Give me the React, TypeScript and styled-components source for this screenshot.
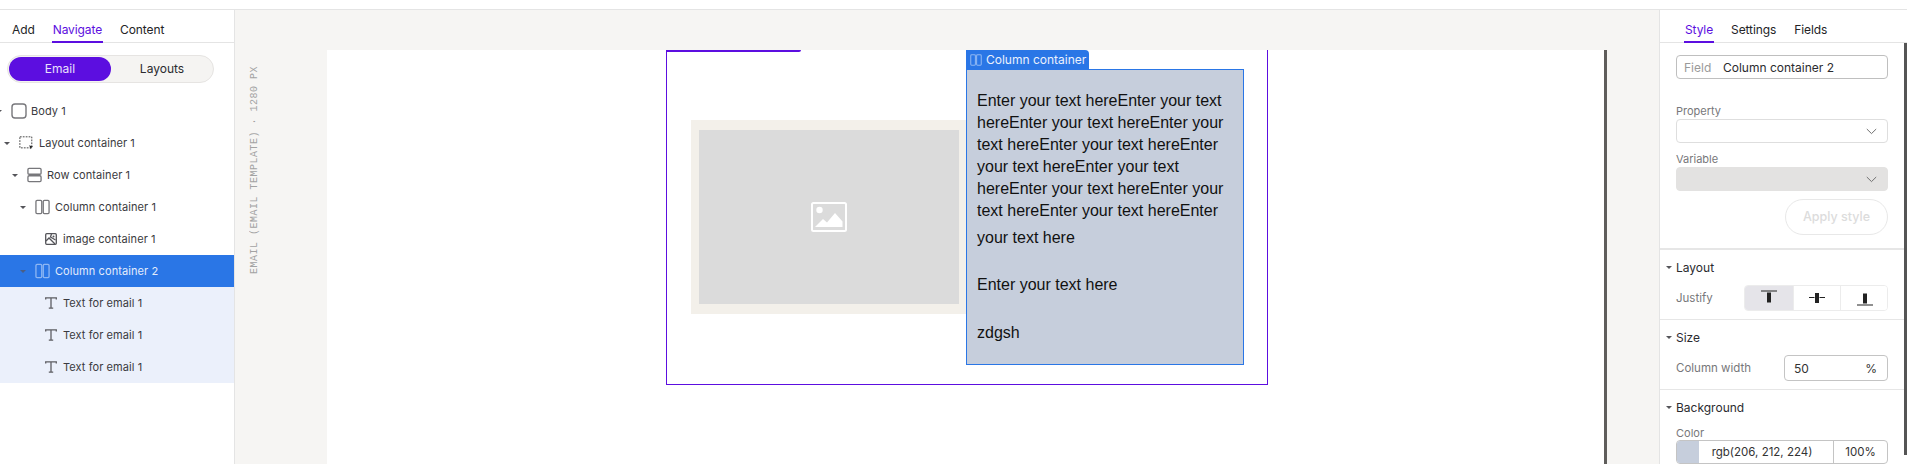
import React from 'react';
import styled, { createGlobalStyle } from 'styled-components';

const Global = createGlobalStyle`
  html, body { margin: 0; padding: 0; width: 1907px; height: 464px; overflow: hidden; background: #fff; }
  * { box-sizing: border-box; }
  #root { width: 1907px; height: 464px; }
`;

const UI = `"Inter", "Noto Sans", sans-serif`;

const Page = styled.div`
  display: flex; flex-direction: column; width: 1907px; height: 464px; font-family: ${UI}; color: #2b2b2f; overflow: hidden;
`;
const TopBar = styled.div`height: 10px; flex: none; border-bottom: 1px solid #e4e4e4; background: #fff;`;
const Main = styled.div`display: flex; flex: 1; min-height: 0;`;

const LeftPanel = styled.aside`width: 235px; flex: none; border-right: 1px solid #e4e4e4; background: #fff; overflow: hidden;`;
const RightPanel = styled.aside`position: relative; flex: 1; border-left: 1px solid #e4e4e4; background: #fff; overflow: hidden;`;

const Tabs = styled.div<{ $pad: number; $gap: number }>`
  display: flex; gap: ${p => p.$gap}px; height: 33px; padding-left: ${p => p.$pad}px; border-bottom: 1px solid #e4e4e4;
`;
const Tab = styled.div<{ $active?: boolean }>`
  height: 33px; padding: 0 1px; line-height: 39px; font-size: 12px; letter-spacing: -0.1px; white-space: nowrap;
  color: ${p => (p.$active ? '#5c0ee0' : '#232326')};
  border-bottom: 2px solid ${p => (p.$active ? '#5c0ee0' : 'transparent')};
`;

const Segment = styled.div`
  display: flex; width: 207px; height: 28px; margin: 12px 0 12px 7px; padding: 1px; border: 1px solid #e6e4e2; border-radius: 14px; background: #f5f4f2;
`;
const SegmentItem = styled.div<{ $active?: boolean }>`
  width: 102px; flex: none; height: 24px; border-radius: 12px; text-align: center; line-height: 24px; font-size: 12px;
  color: ${p => (p.$active ? '#e9e0fb' : '#2b2b2f')}; background: ${p => (p.$active ? '#5c0ee0' : 'transparent')};
`;

const Tree = styled.div`display: flex; flex-direction: column;`;
const TreeRow = styled.div<{ $depth: number; $state?: 'selected' | 'child' }>`
  display: flex; align-items: center; height: 32px; padding-left: ${p => p.$depth}px; font-size: 11px; letter-spacing: 0.08px; white-space: nowrap;
  color: ${p => (p.$state === 'selected' ? '#e3ecfc' : '#3a3a40')};
  background: ${p => (p.$state === 'selected' ? '#2a76e6' : p.$state === 'child' ? '#ebf0fb' : 'transparent')};
`;
const Caret = styled.span<{ $dark?: boolean }>`
  width: 0; height: 0; flex: none; margin-right: 9px; border-left: 3px solid transparent; border-right: 3px solid transparent;
  border-top: 3px solid ${p => (p.$dark ? '#4a5e85' : '#55555a')};
`;
const BodyCaret = styled(Caret)`margin-left: -4px;`;
const Spacer = styled.span`width: 11px; flex: none;`;
const IconSlot = styled.span<{ $w: number; $gap: number }>`
  display: flex; flex: none; width: ${p => p.$w}px; margin-right: ${p => p.$gap}px;
`;

const BodyIcon = () => (
  <svg width="16" height="16" viewBox="0 0 16 16" fill="none" stroke="#77777b" strokeWidth="1.4"><rect x="1" y="1" width="14" height="14" rx="3" /></svg>
);
const LayoutIcon = () => (
  <svg width="17" height="16" viewBox="0 0 17 16" fill="none"><rect x="1" y="1" width="13.5" height="12.5" stroke="#333" strokeWidth="1" strokeDasharray="2 1.3" /><path d="M11.5 10.5l4.5 1.8-1.8.8-.8 2z" fill="#222" /></svg>
);
const RowIcon = () => (
  <svg width="16" height="16" viewBox="0 0 16 16" fill="none" stroke="#77777b" strokeWidth="1.4"><rect x="1" y="1" width="14" height="6.2" rx="1.2" /><rect x="1" y="8.8" width="14" height="6.2" rx="1.2" /></svg>
);
const ColumnIcon = ({ c = '#77777b', size = 16 }: { c?: string; size?: number }) => (
  <svg width={size} height={size} viewBox="0 0 16 16" fill="none" stroke={c} strokeWidth="1.4"><rect x="1" y="1" width="6.2" height="14" rx="1.2" /><rect x="8.8" y="1" width="6.2" height="14" rx="1.2" /></svg>
);
const ImageIcon = () => (
  <svg width="12" height="12" viewBox="0 0 12 12" fill="none" stroke="#55555a" strokeWidth="1.3"><rect x="0.7" y="0.7" width="10.6" height="10.6" rx="1" /><path d="M1 8l3-3 6 6M6.5 1l-1 3 5 3" /><circle cx="8.5" cy="3.5" r="1" fill="#55555a" stroke="none" /></svg>
);
const TextIcon = () => (
  <svg width="12" height="12" viewBox="0 0 12 12" fill="none" stroke="#5d5d63" strokeWidth="1.3"><path d="M.7 2.5V.8h10.6v1.7M6 .8v10.4M3.8 11.2h4.4" /></svg>
);

const Canvas = styled.main`
  flex: none; width: 1424px; background: #f6f5f3; display: flex; padding-top: 40px; padding-left: 92px; padding-right: 52px; overflow: hidden;
`;
const Ruler = styled.div`
  position: absolute; left: 249px; top: 66px; writing-mode: vertical-rl; transform: rotate(180deg);
  font-family: "Liberation Mono", monospace; font-size: 10px; letter-spacing: 0.5px; color: #a3a3a3; white-space: nowrap;
`;
const Sheet = styled.div`
  flex: 1; background: #fff; border-right: 3px solid #5f5d5b; padding-left: 3px; display: flex; justify-content: center; align-items: flex-start;
`;
const Frame = styled.div`
  position: relative; display: flex; flex: none; width: 602px; height: 335px; padding: 0 23px 0 24px; border: 1px solid #5c0ee0; border-top-width: 0;
`;
const FrameTop = styled.div`position: absolute; left: -1px; top: 0; width: 135px; height: 2px; background: #5c0ee0; border-bottom-right-radius: 2px;`;
const ImageCell = styled.div`
  width: 275px; height: 194px; flex: none; margin-top: 70px; padding: 10px 7px 10px 8px; background: #f3f0ea;
`;
const ImagePlaceholder = styled.div`
  width: 100%; height: 100%; background: #dbdbdb; display: flex; align-items: center; justify-content: center;
`;
const Column = styled.div`
  position: relative; width: 278px; height: 296px; flex: none; margin-top: 19px; padding: 20px 9px 0 10px; background: #c6cedc; border: 1px solid #2a76e6;
  font-family: "Liberation Sans", Arial, sans-serif; font-size: 16px; line-height: 22px; color: #111;
`;
const ColumnLabel = styled.div`
  position: absolute; left: -1px; top: -20px; width: 123px; height: 20px; display: flex; align-items: center; gap: 4px; padding-left: 4px;
  background: #2a76e6; border-top-right-radius: 4px; font-family: ${UI}; font-size: 12px; line-height: 14px; color: #eaf1fd; white-space: nowrap;
`;
const Para = styled.p<{ $top: number }>`margin: ${p => p.$top}px 0 0;`;

const FieldBox = styled.div`
  display: flex; align-items: center; width: 212px; height: 24px; margin: 12px 0 0 16px; padding-left: 7px; border: 1px solid #bfbfbf; border-radius: 4px; font-size: 12px;
`;
const FieldTag = styled.span`color: #9a9a9a; width: 39px;`;
const SmallLabel = styled.div<{ $top: number }>`
  margin: ${p => p.$top}px 0 0 16px; height: 14px; line-height: 14px; font-size: 11px; color: #77777a;
`;
const Select = styled.div<{ $disabled?: boolean }>`
  display: flex; align-items: center; justify-content: flex-end; width: 212px; height: 24px; margin: 1px 0 0 16px; padding-right: 10px; border-radius: 4px;
  border: 1px solid ${p => (p.$disabled ? '#e3e2e1' : '#dedede')}; background: ${p => (p.$disabled ? '#e3e2e1' : '#fff')};
`;
const ApplyRow = styled.div`display: flex; justify-content: flex-end; width: 212px; margin: 8px 0 0 16px;`;
const ApplyButton = styled.div`
  width: 103px; height: 36px; border: 1px solid #e8e8e8; border-radius: 18px; text-align: center; line-height: 34px; font-size: 12.5px; font-weight: 500; color: #dcdcdc;
`;
const Section = styled.section<{ $border: number; $top: number }>`
  margin-top: ${p => p.$top}px; padding: 9px 19px 0 6px; border-top: ${p => p.$border}px solid #e6e6e6;
`;
const SectionHead = styled.div`display: flex; align-items: center; height: 16px; font-size: 12px; color: #2b2b2f;`;
const SectionCaret = styled(Caret)`margin-right: 4px;`;
const PropRow = styled.div`display: flex; align-items: center; justify-content: space-between; height: 26px; margin-top: 10px; padding-left: 10px; font-size: 11.5px; color: #77777a;`;
const Justify = styled.div`display: flex; width: 144px; height: 26px; border: 1px solid #ececec; border-radius: 4px; overflow: hidden;`;
const JustifyButton = styled.div<{ $active?: boolean; $w: number }>`
  width: ${p => p.$w}px; flex: none; display: flex; align-items: center; justify-content: center;
  background: ${p => (p.$active ? '#e5e4e9' : '#fff')}; border-right: 1px solid #ececec; &:last-child { border-right: 0; }
`;
const NumberBox = styled.div`
  display: flex; align-items: center; justify-content: space-between; width: 104px; height: 26px; padding: 0 10px 0 9px; border: 1px solid #c4c4c4; border-radius: 4px; font-size: 12px; color: #333;
`;
const ColorBox = styled.div`
  display: flex; width: 212px; height: 24px; margin-left: 10px; border: 1px solid #c4c4c4; border-radius: 4px; overflow: hidden; font-size: 11.5px; color: #333; line-height: 22px;
`;
const Swatch = styled.span`width: 22px; flex: none; background: #c6cedc;`;
const ColorValue = styled.span`flex: 1; text-align: center; padding-right: 8px; border-right: 1px solid #c4c4c4; white-space: nowrap;`;
const Alpha = styled.span`width: 53px; flex: none; text-align: center;`;
const ColorLabel = styled(SmallLabel)`margin-left: 10px;`;
const Scrollbar = styled.div`position: absolute; right: 0; top: 33px; width: 3px; height: 412px; background: #555;`;

const Chevron = () => (
  <svg width="11" height="7" viewBox="0 0 11 7" fill="none" stroke="#707070" strokeWidth="1"><path d="M.8 1l4.7 4.6L10.2 1" /></svg>
);
const AlignIcon = ({ v }: { v: 'top' | 'mid' | 'bot' }) => (
  <svg width="16" height="16" viewBox="0 0 16 16">
    <rect x="6" y={v === 'top' ? 2.5 : v === 'mid' ? 3 : 3.5} width="4" height="10" fill="#222" />
    {v === 'mid'
      ? <path d="M0 7.5h5.5M10.5 7.5H16" stroke="#222" strokeWidth="1" />
      : <rect x="0" y={v === 'top' ? 0.5 : 14.5} width="16" height="1" fill="#222" />}
  </svg>
);

const TREE: { label: string; depth: number; caret: boolean; icon: React.ReactNode; w: number; gap: number; state?: 'selected' | 'child' }[] = [
  { label: 'Layout container 1', depth: 4, caret: true, icon: <LayoutIcon />, w: 15, gap: 5 },
  { label: 'Row container 1', depth: 12, caret: true, icon: <RowIcon />, w: 15, gap: 5 },
  { label: 'Column container 1', depth: 20, caret: true, icon: <ColumnIcon />, w: 15, gap: 5 },
  { label: 'image container 1', depth: 34, caret: false, icon: <ImageIcon />, w: 12, gap: 6 },
  { label: 'Column container 2', depth: 20, caret: true, icon: <ColumnIcon c="#8db6f3" />, w: 15, gap: 5, state: 'selected' },
  { label: 'Text for email 1', depth: 34, caret: false, icon: <TextIcon />, w: 12, gap: 6, state: 'child' },
  { label: 'Text for email 1', depth: 34, caret: false, icon: <TextIcon />, w: 12, gap: 6, state: 'child' },
  { label: 'Text for email 1', depth: 34, caret: false, icon: <TextIcon />, w: 12, gap: 6, state: 'child' },
];

const REPEAT = 'Enter your text here'.repeat(10) + 'Enter';

export default function App() {
  return (
    <Page>
      <Global />
      <TopBar />
      <Main>
        <LeftPanel>
          <Tabs $pad={11} $gap={16}>
            <Tab>Add</Tab>
            <Tab $active>Navigate</Tab>
            <Tab>Content</Tab>
          </Tabs>
          <Segment>
            <SegmentItem $active>Email</SegmentItem>
            <SegmentItem>Layouts</SegmentItem>
          </Segment>
          <Tree>
            <TreeRow $depth={0}>
              <BodyCaret />
              <IconSlot $w={16} $gap={4}><BodyIcon /></IconSlot>
              Body 1
            </TreeRow>
            {TREE.map((r, i) => (
              <TreeRow key={i} $depth={r.depth} $state={r.state}>
                {r.caret ? <Caret $dark={r.state === 'selected'} /> : <Spacer />}
                <IconSlot $w={r.w} $gap={r.gap}>{r.icon}</IconSlot>
                {r.label}
              </TreeRow>
            ))}
          </Tree>
        </LeftPanel>
        <Canvas>
          <Ruler>EMAIL (EMAIL TEMPLATE) · 1280 PX</Ruler>
          <Sheet>
            <Frame>
              <FrameTop />
              <ImageCell>
                <ImagePlaceholder>
                  <svg width="36" height="30" viewBox="0 0 36 30" fill="none">
                    <rect x="1" y="1" width="34" height="28" rx="1.5" stroke="#fff" strokeWidth="2" />
                    <circle cx="8.5" cy="8" r="3.2" fill="#fff" />
                    <path d="M4 25l8-8 4 3.5L24 11l7.5 8.5V25z" fill="#fff" />
                  </svg>
                </ImagePlaceholder>
              </ImageCell>
              <Column>
                <ColumnLabel><ColumnIcon c="#8db6f3" size={12} /><span>Column container</span></ColumnLabel>
                <Para $top={0}>{REPEAT}</Para>
                <Para $top={5}>your text here</Para>
                <Para $top={25}>Enter your text here</Para>
                <Para $top={26}>zdgsh</Para>
              </Column>
            </Frame>
          </Sheet>
        </Canvas>
        <RightPanel>
          <Tabs $pad={24} $gap={16}>
            <Tab $active>Style</Tab>
            <Tab>Settings</Tab>
            <Tab>Fields</Tab>
          </Tabs>
          <FieldBox><FieldTag>Field</FieldTag>Column container 2</FieldBox>
          <SmallLabel $top={25}>Property</SmallLabel>
          <Select><Chevron /></Select>
          <SmallLabel $top={9}>Variable</SmallLabel>
          <Select $disabled><Chevron /></Select>
          <ApplyRow><ApplyButton>Apply style</ApplyButton></ApplyRow>
          <Section $border={2} $top={13}>
            <SectionHead><SectionCaret />Layout</SectionHead>
            <PropRow>
              Justify
              <Justify>
                <JustifyButton $active $w={49}><AlignIcon v="top" /></JustifyButton>
                <JustifyButton $w={47}><AlignIcon v="mid" /></JustifyButton>
                <JustifyButton $w={48}><AlignIcon v="bot" /></JustifyButton>
              </Justify>
            </PropRow>
          </Section>
          <Section $border={1} $top={8}>
            <SectionHead><SectionCaret />Size</SectionHead>
            <PropRow>
              Column width
              <NumberBox><span>50</span><span>%</span></NumberBox>
            </PropRow>
          </Section>
          <Section $border={1} $top={8}>
            <SectionHead><SectionCaret />Background</SectionHead>
            <ColorLabel $top={11}>Color</ColorLabel>
            <ColorBox>
              <Swatch />
              <ColorValue>rgb(206, 212, 224)</ColorValue>
              <Alpha>100%</Alpha>
            </ColorBox>
          </Section>
          <Scrollbar />
        </RightPanel>
      </Main>
    </Page>
  );
}
